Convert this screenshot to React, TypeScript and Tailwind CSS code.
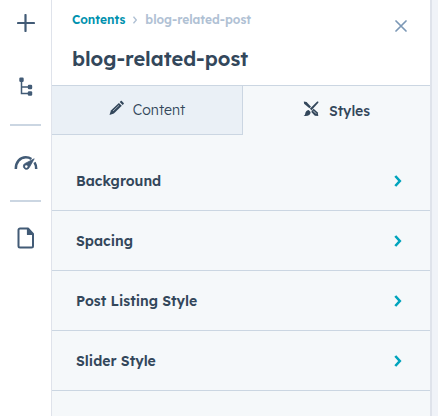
import type { ReactNode } from "react";

const sections = ["Background", "Spacing", "Post Listing Style", "Slider Style"];

function PlusIcon() {
  return (
    <svg width="18" height="18" viewBox="0 0 18 18" fill="none" stroke="currentColor" strokeWidth="2.2" strokeLinecap="round">
      <path d="M8.500 1v16M1 9h16" />
    </svg>
  );
}

function TreeIcon() {
  return (
    <svg width="14" height="20" viewBox="0 0 14 20" fill="currentColor">
      <path d="M2.500 3v13.500H11M2.500 10H11" fill="none" stroke="currentColor" strokeWidth="1.500" />
      <rect x="0.300" y="0.500" width="4.400" height="4.400" rx="1.200" />
      <rect x="8.800" y="7.800" width="4.400" height="4.400" rx="1.200" />
      <rect x="8.800" y="14.300" width="4.400" height="4.400" rx="1.200" />
    </svg>
  );
}

function GaugeIcon() {
  return (
    <svg width="24" height="16" viewBox="0 0 24 16" fill="none" stroke="currentColor">
      <path d="M1.800 14C1.600 7.200 6 2.300 11.800 2.300c2.200 0 4 .6 5.600 1.700" strokeWidth="2.500" />
      <path d="M20.500 7.400c1.200 1.800 1.700 4 1.700 6.600" strokeWidth="2.500" />
      <path d="M20.200 3.800 15.300 12.400a3.100 3.100 0 1 1-4.700-3.700Z" fill="currentColor" strokeWidth="0.800" strokeLinejoin="round" />
      <circle cx="12.300" cy="11.600" r="1.300" fill="white" stroke="none" />
    </svg>
  );
}

function FileIcon() {
  return (
    <svg width="18" height="22" viewBox="0 0 18 22" fill="none" stroke="currentColor" strokeWidth="2" strokeLinejoin="round">
      <path d="M3 1.500h8L16 7v12a1.500 1.500 0 0 1-1.500 1.500H3A1.500 1.500 0 0 1 1.500 19V3A1.500 1.500 0 0 1 3 1.500Z" />
      <path d="M10.500 2v5.500H16Z" fill="currentColor" strokeWidth="1.200" />
    </svg>
  );
}

function PencilIcon() {
  return (
    <svg width="16" height="16" viewBox="0 0 16 16" fill="currentColor">
      <path d="m.5 15 1.400-4.600 8-7.500 2.900 2.900-7.900 7.700Z" />
      <path d="m10.700 2.100 1.100-1.100c.3-.3.700-.3 1 0l1.900 1.900c.3.300.3.700 0 1l-1.100 1.100Z" />
      <path d="m4 11 6-5.700" fill="none" stroke="#eaf0f6" strokeWidth="0.600" />
    </svg>
  );
}

function DesignIcon() {
  return (
    <svg width="16" height="16" viewBox="0 0 16 16" fill="currentColor">
      <path d="M.8.600 3.600.900l4.400 4.800-1.600 1.600L1.100 2.800Z" />
      <path d="m9.100 9.300 1.500-1.500 4.200 3.800.5 3.400-3.400-.3-3.600-3.700Z" />
      <path d="M14.200.600c.8-.5 1.600.3 1.100 1.100L8.500 9.300 6.900 7.800Z" />
      <path d="M5.700 9 7.600 10.900c.1 2.900-2.900 4.700-7 3.800 1.800-.7 1.400-1.800 1.900-3.300.5-1.400 1.900-2.400 3.200-2.400Z" />
      <path d="m10.200 9.700 3 3" stroke="#f5f8fa" strokeWidth="0.700" />
    </svg>
  );
}

function ChevronIcon() {
  return (
    <svg width="8" height="12" viewBox="0 0 8 12" fill="none" stroke="currentColor" strokeWidth="2.600">
      <path d="m1.300 1 4.500 5-4.500 5" />
    </svg>
  );
}

function RailButton({ label, children }: { label: string; children: ReactNode }) {
  return (
    <button type="button" aria-label={label} className="flex h-8 w-8 items-center justify-center">
      {children}
    </button>
  );
}

export default function App() {
  return (
    <div className="flex min-h-screen bg-[#f5f8fa] font-[Lexend,'Lexend_Deca',Inter,sans-serif] text-[#33475b]">
      <nav aria-label="Tools" className="flex w-[52px] shrink-0 flex-col items-center border-r border-[#dfe3eb] bg-white pt-[7px] text-[#425b76]">
        <RailButton label="Add">
          <PlusIcon />
        </RailButton>
        <div className="mt-8">
          <RailButton label="Content tree">
            <TreeIcon />
          </RailButton>
        </div>
        <hr className="my-[21px] w-[31px] border-t-2 border-[#cbd6e2]" />
        <RailButton label="Optimize">
          <GaugeIcon />
        </RailButton>
        <hr className="mt-[21px] mb-5 w-[31px] border-t-2 border-[#cbd6e2]" />
        <RailButton label="Pages">
          <FileIcon />
        </RailButton>
      </nav>

      <main className="min-w-0 flex-1">
        <header className="border-b border-[#cbd6e2] bg-white px-5 pt-3 pb-3">
          <div className="flex items-start justify-between">
            <nav aria-label="Breadcrumb" className="flex items-center gap-2 text-xs leading-4 font-semibold">
              <a href="#contents" className="text-[#0091ae]">
                Contents
              </a>
              <svg width="4" height="8" viewBox="0 0 4 8" fill="none" stroke="#b0c1d4" strokeWidth="1.400">
                <path d="m.5.700 2.800 3.300-2.800 3.300" />
              </svg>
              <span className="text-[#b0c1d4]">blog-related-post</span>
            </nav>
            <button type="button" aria-label="Close" className="mt-2 mr-[3px] text-[#7c98b6]">
              <svg width="12" height="12" viewBox="0 0 12 12" fill="none" stroke="currentColor" strokeWidth="1.700" strokeLinecap="round">
                <path d="m1 1 10 10M11 1 1 11" />
              </svg>
            </button>
          </div>
          <h1 className="mt-3 text-xl leading-[29px] font-semibold">blog-related-post</h1>
        </header>

        <div role="tablist" className="flex text-sm">
          <button
            type="button"
            role="tab"
            aria-selected="false"
            className="flex h-[49px] w-[calc(50%+2px)] items-center justify-center gap-2 border-r border-b border-[#cbd6e2] bg-[#eaf0f6] font-light"
          >
            <span className="-mt-1">
              <PencilIcon />
            </span>
            Content
          </button>
          <button type="button" role="tab" aria-selected="true" className="flex h-[49px] flex-1 items-center justify-center gap-2.5 font-medium">
            <span className="-mt-1">
              <DesignIcon />
            </span>
            Styles
          </button>
        </div>

        <div className="pt-4">
          {sections.map((name) => (
            <button
              key={name}
              type="button"
              className="flex h-[60px] w-full items-center justify-between border-b border-[#cbd6e2] pr-7 pl-6 text-left text-sm font-semibold"
            >
              {name}
              <span className="text-[#00a4bd]">
                <ChevronIcon />
              </span>
            </button>
          ))}
        </div>
      </main>

      <div className="w-2 shrink-0 border-l-2 border-[#dfe3eb] bg-[#f0f3f8]" />
    </div>
  );
}
